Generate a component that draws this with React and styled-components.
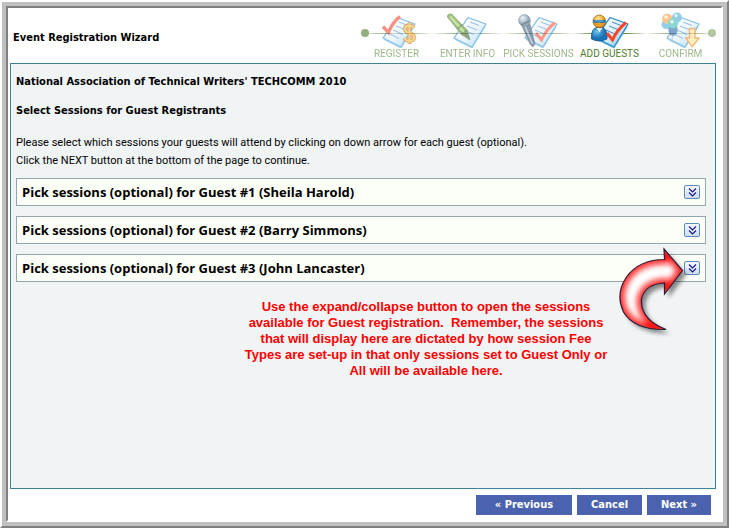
import React, { useState } from 'react';
import styled, { createGlobalStyle } from 'styled-components';

const teal = '#3d8196'
const panelGrey = '#f0f4f5'
const ivory = '#fcfff7'
const rowBorder = '#95a5ae'
const blue = '#4b63ae'
const green = '#4f7a28'
const red = '#ff0000'
const frameGrey = '#c0c0c0'
const frameDark = '#808080'
const uiFont = `"DejaVu Sans Condensed", "DejaVu Sans", Tahoma, sans-serif`
const rowFont = `"Open Sans", Tahoma, sans-serif`
const textFont = `Roboto, Tahoma, sans-serif`

const GlobalStyle = createGlobalStyle`
* {
    box-sizing: border-box;
}

body {
    margin: 0;
    background: #fff;
    color: #000;
    font-family: ${uiFont};
    font-size: 11px;
}
`

const Frame = styled.div`
min-height: 100vh;
display: flex;
border: 2px solid;
border-color: #fff ${frameDark} ${frameDark} #fff;
`

const FrameEdge = styled.div`
flex: 1;
min-width: 0;
display: flex;
border: 4px solid ${frameGrey};
`

const Page = styled.main`
flex: 1;
min-width: 0;
display: flex;
flex-direction: column;
border: 2px solid;
border-color: ${frameDark} #fff #fff ${frameDark};
padding: 0 5px 5px 2px;
`

const Header = styled.header`
display: flex;
justify-content: space-between;
align-items: flex-start;
height: 55px;
`

const WizardTitle = styled.h1`
margin: 21px 0 0 3px;
font-size: 11px;
line-height: 18px;
`

const Steps = styled.ol`
display: grid;
grid-template-columns: repeat(5, 71px);
margin: 0;
padding: 0;
list-style: none;
`

const Step = styled.li`
display: flex;
flex-direction: column;
align-items: center;
color: ${green};
font-family: ${textFont};
font-size: 10px;
line-height: 12px;
white-space: nowrap;
`

const StepLabel = styled.span`
opacity: ${({ active }) => active ? 1 : 0.55};
`

const StepIcon = styled.svg`
display: block;
width: 71px;
height: 40px;
`

const Panel = styled.section`
flex: 1;
border: 1px solid ${teal};
background: ${panelGrey};
padding: 9px 9px 8px 5px;
`

const Heading = styled.h2`
margin: 0 0 11px;
font-size: 11px;
line-height: 18px;
`

const Intro = styled.p`
margin: 14px 0 8px;
font-family: ${textFont};
font-size: 11px;
line-height: 18px;
`

const GuestList = styled.div`
display: flex;
flex-direction: column;
gap: 10px;
`

const GuestRow = styled.div`
position: relative;
display: flex;
justify-content: space-between;
align-items: center;
height: 28px;
padding: 0 5px;
border: 1px solid ${rowBorder};
background: ${ivory};
`

const GuestName = styled.h3`
margin: 0;
font-family: ${rowFont};
font-size: 13px;
line-height: 18px;
`

const ExpandBtn = styled.button`
display: flex;
justify-content: center;
align-items: center;
width: 16px;
height: 14px;
padding: 0;
border: 1px solid #5b8bbd;
border-radius: 2px;
background: linear-gradient(#f4f8fd, #cfdcec);
cursor: pointer;
`

const Pointer = styled.svg`
position: absolute;
top: -9px;
right: 8px;
width: 80px;
height: 92px;
pointer-events: none;
`

const Note = styled.p`
width: 370px;
margin: 17px 95px 0 auto;
color: ${red};
font-family: "Liberation Sans", Arial, sans-serif;
font-size: 13px;
font-weight: bold;
line-height: 16px;
text-align: center;
`

const Footer = styled.footer`
display: flex;
justify-content: flex-end;
gap: 5px;
padding: 6px 5px 0;
`

const NavBtn = styled.button`
height: 20px;
padding: 0 ${({ wide }) => wide ? "19px" : "14px"};
border: 0;
background: ${blue};
color: #fff;
font-family: ${uiFont};
font-size: 11px;
font-weight: bold;
line-height: 20px;
cursor: pointer;
`

const Paper = () => (
    <g>
        <path d="M36 9.5 L54 16 L40 39 L22 30 Z" fill="url(#paper)" stroke="#1c86c8" strokeWidth="1.3" strokeLinejoin="round" />
        <path d="M23 31.5 L40 40 L53 19" fill="none" stroke="#4ba8dd" />
        <path d="M38 14 l9 3.5 M35 18 l10 4 M32 22 l10 4.5 M29 26 l9 4.5" stroke="#4a86c4" fill="none" />
    </g>
)

const Check = () => (
    <path d="M33 25 L38.5 32 Q43 22 52 14.5" fill="none" stroke="#ff4526" strokeWidth="3" />
)

const RegisterArt = () => (
    <g>
        <Paper />
        <path d="M22 18.5 L27.5 24.5 Q31 15 39 8.5" fill="none" stroke="#f3351e" strokeWidth="3.4" />
        <path d="M52.5 20 Q51.5 17.5 48.5 17.5 Q44 17.5 44 21 Q44 24 48.5 25 Q53 26 53 29.5 Q53 33 48.5 33 Q44.5 33 43.5 30 M48.5 14.5 V36" fill="none" stroke="#a8600a" strokeWidth="3.8" />
        <path d="M52.5 20 Q51.5 17.5 48.5 17.5 Q44 17.5 44 21 Q44 24 48.5 25 Q53 26 53 29.5 Q53 33 48.5 33 Q44.5 33 43.5 30 M48.5 15 V35.5" fill="none" stroke="#ffb62a" strokeWidth="2" />
    </g>
)

const InfoArt = () => (
    <g>
        <Paper />
        <path d="M15.5 9 Q15 5.5 19.5 6 L35 22 L38 32 L29.5 26.5 Z" fill="#4f8f18" stroke="#2c5608" strokeWidth="0.8" />
        <path d="M18 8.5 L32 24" stroke="#a6d468" strokeWidth="2" />
        <path d="M25 21 L30.5 16.5 M29.5 26.5 L35 22" stroke="#2c520b" strokeWidth="1.2" />
        <path d="M31 26.5 L35 23.5 L38 32 Z" fill="#3a5a24" />
    </g>
)

const SessionsArt = () => (
    <g>
        <Paper />
        <Check />
        <path d="M18.5 17 L26.5 14 L32 36 L30 39 L27.5 37 Z" fill="#2b4a6c" stroke="#182a3c" strokeWidth="0.6" />
        <path d="M22 18 L29.5 36" stroke="#9db9d0" strokeWidth="1.5" />
        <circle cx="21.5" cy="12.5" r="5.8" fill="url(#mic)" stroke="#30475c" strokeWidth="0.8" />
        <path d="M18 17 L26.5 13" stroke="#1d3144" strokeWidth="1.5" />
    </g>
)

const GuestsArt = () => (
    <g>
        <Paper />
        <path d="M17.5 31 Q17 20 23 19.5 H28 Q33.5 20.5 33 31 Q25 35 17.5 31 Z" fill="url(#body)" stroke="#0d5288" strokeWidth="0.8" />
        <path d="M22.5 20 L25.5 24.5 L28.5 20 Z" fill="#e8f6ff" />
        <circle cx="25.3" cy="13.3" r="6.3" fill="url(#face)" stroke="#8a5a10" strokeWidth="0.7" />
        <path d="M19.2 12 H31.4 V14.2 Q28 15.5 25.3 14.5 Q22 15.5 19.2 14.2 Z" fill="#1c6eae" />
        <path d="M20.5 13 H29.5" stroke="#79c8f2" />
        <Check />
    </g>
)

const ConfirmArt = () => (
    <g>
        <Paper />
        <path d="M21 17 L28 27 L32 14 M28 27 Q26 30 28 34" fill="none" stroke="#4b9ab5" strokeWidth="0.8" />
        <circle cx="21" cy="16.5" r="4.5" fill="#3aa9dc" />
        <circle cx="22.3" cy="10.8" r="5.2" fill="#f39a3a" />
        <circle cx="32" cy="9.5" r="5" fill="#3fa3d4" />
        <ellipse cx="28" cy="22" rx="4.6" ry="6" fill="#1c5da3" />
        <circle cx="28" cy="15.5" r="5" fill="#2bb9ae" />
        <circle cx="21" cy="9" r="1.8" fill="#ffe9c4" />
        <circle cx="31" cy="7.6" r="1.6" fill="#d6f3fb" />
        <circle cx="27" cy="13.8" r="1.8" fill="#d3fff4" />
        <path d="M44.5 20.5 H50 V30 H54 L47.2 38.8 L40.8 30 H44.5 Z" fill="#ffe28c" stroke="#ec7c12" strokeWidth="1.4" />
    </g>
)

const steps = [
    { label: "REGISTER", Art: RegisterArt, dot: 4 },
    { label: "ENTER INFO", Art: InfoArt },
    { label: "PICK SESSIONS", Art: SessionsArt },
    { label: "ADD GUESTS", Art: GuestsArt, active: true },
    { label: "CONFIRM", Art: ConfirmArt, dot: 67 },
]

const guests = [
    { id: 1, name: "Sheila Harold" },
    { id: 2, name: "Barry Simmons" },
    { id: 3, name: "John Lancaster" },
]

const Gradients = () => (
    <defs>
        <linearGradient id="paper" x1="0" y1="0" x2="1" y2="1">
            <stop offset="0" stopColor="#ffffff" />
            <stop offset="0.5" stopColor="#dff1fd" />
            <stop offset="1" stopColor="#74c0ef" />
        </linearGradient>
        <radialGradient id="mic" cx="0.35" cy="0.3">
            <stop offset="0" stopColor="#e5eef5" />
            <stop offset="1" stopColor="#3f678c" />
        </radialGradient>
        <radialGradient id="body" cx="0.35" cy="0.3">
            <stop offset="0" stopColor="#6cc3ee" />
            <stop offset="1" stopColor="#1a73b4" />
        </radialGradient>
        <radialGradient id="face" cx="0.4" cy="0.25">
            <stop offset="0" stopColor="#ffe592" />
            <stop offset="1" stopColor="#ee9a1e" />
        </radialGradient>
        <linearGradient id="line" gradientUnits="userSpaceOnUse" x1="0" y1="0" x2="71" y2="0">
            <stop offset="0" stopColor={green} stopOpacity="0.1" />
            <stop offset="0.3" stopColor={green} />
            <stop offset="0.7" stopColor={green} />
            <stop offset="1" stopColor={green} stopOpacity="0.1" />
        </linearGradient>
    </defs>
)

const arrowShape = "M46 3 L64.5 24.5 L46.5 48 V37 Q27 38 23.5 53 Q22 73 48 83.5 Q16 84 5.5 66 Q-3 48 8.5 31 Q21 13.5 46.5 13.5 Z"

const ArrowPointer = () => (
    <Pointer viewBox="-1 0 80 92" aria-hidden="true">
        <defs>
            <clipPath id="arrowClip"><path d={arrowShape} /></clipPath>
            <filter id="soft" x="-30%" y="-30%" width="160%" height="160%"><feGaussianBlur stdDeviation="3" /></filter>
            <filter id="shade" x="-30%" y="-30%" width="160%" height="160%"><feGaussianBlur stdDeviation="2" /></filter>
        </defs>
        <path d={arrowShape} transform="translate(4 4)" fill="#000" opacity="0.45" filter="url(#shade)" />
        <path d={arrowShape} fill="#fff" />
        <g clipPath="url(#arrowClip)">
            <path d={arrowShape} fill="none" stroke="#ff1010" strokeWidth="8" filter="url(#soft)" />
        </g>
        <path d={arrowShape} fill="none" stroke="#2a1a35" strokeWidth="1.2" />
    </Pointer>
)

const App = () => {
    const [openGuest, setOpenGuest] = useState(null)

    return (
        <Frame>
            <GlobalStyle />
            <FrameEdge>
                <Page>
                    <Header>
                        <WizardTitle>Event Registration Wizard</WizardTitle>
                        <Steps>
                            {steps.map(({ label, Art, active, dot }) => (
                                <Step key={label} aria-current={active ? "step" : undefined}>
                                    <StepIcon viewBox="0 0 71 40" aria-hidden="true">
                                        <Gradients />
                                        <rect x={dot === 4 ? 4 : 0} y="25" width={dot ? 67 : 71} height="1" fill="url(#line)" opacity={active ? 1 : 0.55} />
                                        {dot && <circle cx={dot} cy="25" r="4" fill={dot === 4 ? "#93b07c" : "#b3c6a2"} />}
                                        <g opacity={active ? 1 : 0.55}><Art /></g>
                                    </StepIcon>
                                    <StepLabel active={active ? 1 : 0}>{label}</StepLabel>
                                </Step>
                            ))}
                        </Steps>
                    </Header>
                    <Panel>
                        <Heading>National Association of Technical Writers' TECHCOMM 2010</Heading>
                        <Heading>Select Sessions for Guest Registrants</Heading>
                        <Intro>
                            Please select which sessions your guests will attend by clicking on down arrow for each guest (optional).<br />
                            Click the NEXT button at the bottom of the page to continue.
                        </Intro>
                        <GuestList>
                            {guests.map(({ id, name }) => (
                                <GuestRow key={id}>
                                    <GuestName>Pick sessions (optional) for Guest #{id} ({name})</GuestName>
                                    <ExpandBtn
                                        type="button"
                                        aria-label={`Sessions for ${name}`}
                                        aria-expanded={openGuest === id}
                                        onClick={() => setOpenGuest(openGuest === id ? null : id)}
                                    >
                                        <svg width="9" height="9" viewBox="0 0 9 9" fill="none" stroke="#14148c" strokeWidth="1.1">
                                            <path d="M1 0.5 L4.5 4 L8 0.5 M1 4.5 L4.5 8 L8 4.5" />
                                        </svg>
                                    </ExpandBtn>
                                    {id === guests.length && <ArrowPointer />}
                                </GuestRow>
                            ))}
                        </GuestList>
                        <Note>
                            Use the expand/collapse button to open the sessions available for Guest registration.&nbsp; Remember, the sessions that will display here are dictated by how session Fee Types are set-up in that only sessions set to Guest Only or All will be available here.
                        </Note>
                    </Panel>
                    <Footer>
                        <NavBtn type="button" wide={1}>« Previous</NavBtn>
                        <NavBtn type="button">Cancel</NavBtn>
                        <NavBtn type="button">Next »</NavBtn>
                    </Footer>
                </Page>
            </FrameEdge>
        </Frame>
    );
};

export default App;
